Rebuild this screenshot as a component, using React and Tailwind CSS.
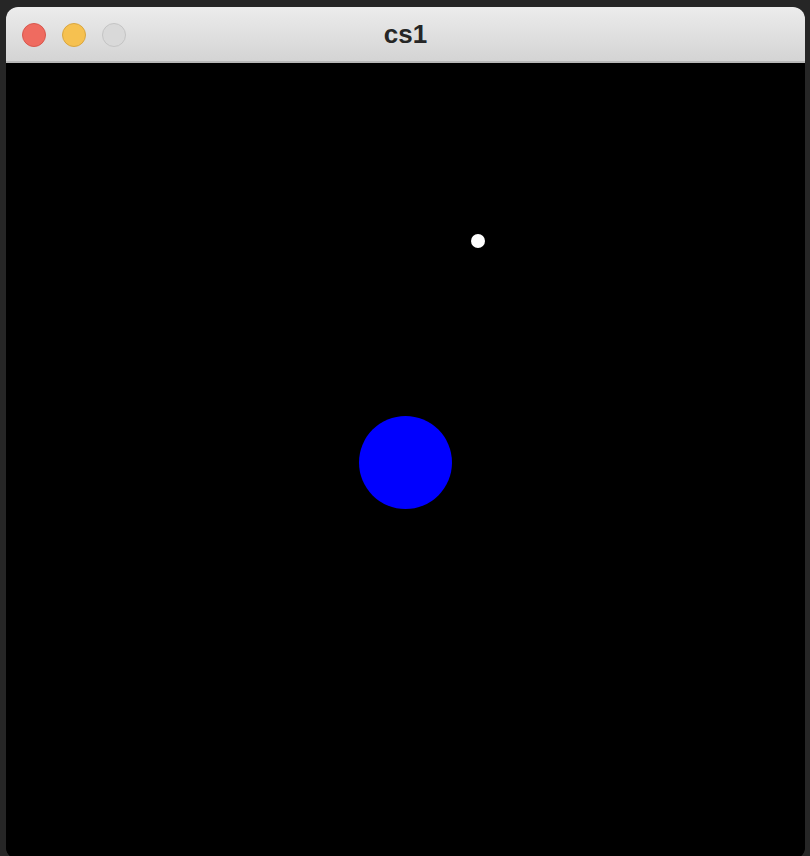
export default function App() {
  return (
    <div className="h-[856px] w-[810px] overflow-hidden bg-[#262626] pl-[6px] pr-[5px] pt-[7px]">
      <div className="flex h-[852px] flex-col overflow-hidden rounded-[12px] bg-black">
        <div className="relative flex h-[54px] shrink-0 items-center bg-gradient-to-b from-[#ececec] to-[#d4d4d4]">
          <div className="flex items-center gap-[16px] pl-[16px] pt-[2px]">
            <span className="h-[24px] w-[24px] rounded-full border border-[#d8574d] bg-[#ef6b60]" />
            <span className="h-[24px] w-[24px] rounded-full border border-[#d9a640] bg-[#f6c150]" />
            <span className="h-[24px] w-[24px] rounded-full border border-[#c4c4c4] bg-[#d9d9d9]" />
          </div>
          <div className="absolute inset-0 flex items-center justify-center pt-[1px] font-['Liberation_Sans',Arial,sans-serif] text-[26px] font-bold text-[#262626]">
            cs1
          </div>
        </div>
        <div className="h-[2px] shrink-0 bg-[#b8b8b8]" />
        <div className="relative flex-1 bg-black">
          <div className="absolute left-[465px] top-[171px] h-[14px] w-[14px] rounded-full bg-white" />
          <div className="absolute left-[353px] top-[353px] h-[93px] w-[93px] rounded-full bg-[#0000ff]" />
        </div>
      </div>
    </div>
  )
}
